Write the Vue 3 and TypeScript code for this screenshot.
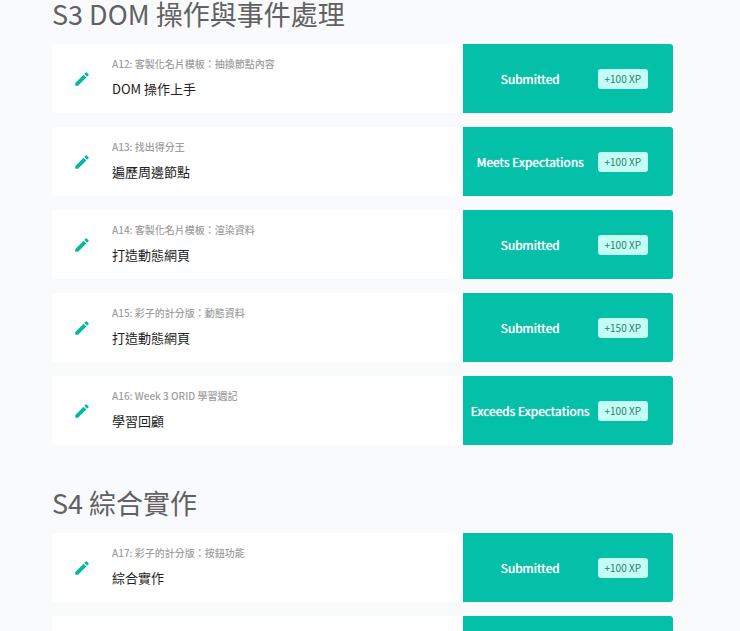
<script setup lang="ts">
interface Assignment {
  code: string
  title: string
  status: string
  xp: number
}
interface Section {
  name: string
  items: Assignment[]
}

const sections: Section[] = [
  {
    name: 'S3 DOM 操作與事件處理',
    items: [
      { code: 'A12: 客製化名片模板：抽換節點內容', title: 'DOM 操作上手', status: 'Submitted', xp: 100 },
      { code: 'A13: 找出得分王', title: '遍歷周邊節點', status: 'Meets Expectations', xp: 100 },
      { code: 'A14: 客製化名片模板：渲染資料', title: '打造動態網頁', status: 'Submitted', xp: 100 },
      { code: 'A15: 彩子的計分版：動態資料', title: '打造動態網頁', status: 'Submitted', xp: 150 },
      { code: 'A16: Week 3 ORID 學習週記', title: '學習回顧', status: 'Exceeds Expectations', xp: 100 },
    ],
  },
  {
    name: 'S4 綜合實作',
    items: [
      { code: 'A17: 彩子的計分版：按鈕功能', title: '綜合實作', status: 'Submitted', xp: 100 },
      { code: '', title: '', status: '', xp: 0 },
    ],
  },
]
</script>

<template>
  <main class="page">
    <section v-for="section in sections" :key="section.name" class="section">
      <h2 class="heading">{{ section.name }}</h2>
      <ul class="list">
        <li v-for="(item, i) in section.items" :key="i" class="card">
          <div class="info">
            <svg v-if="item.code" class="icon" viewBox="0 0 24 24" aria-hidden="true">
              <path d="M3 17.6V20.5a.5.5 0 0 0 .5.5h2.9a.5.5 0 0 0 .35-.15L17.81 9.94l-3.75-3.75L3.15 17.25A.5.5 0 0 0 3 17.6zM20.71 7.04a1 1 0 0 0 0-1.41l-2.34-2.34a1 1 0 0 0-1.41 0l-1.83 1.83 3.75 3.75 1.83-1.83z" />
            </svg>
            <div class="texts">
              <div class="code">{{ item.code }}</div>
              <div class="title">{{ item.title }}</div>
            </div>
          </div>
          <div class="result">
            <span class="status">{{ item.status }}</span>
            <span v-if="item.xp" class="xp">+{{ item.xp }} XP</span>
          </div>
        </li>
      </ul>
    </section>
  </main>
</template>

<style>
body {
  background: #f9fafc;
}
</style>

<style scoped>
.page {
  box-sizing: border-box;
  height: 100vh;
  overflow: hidden;
  padding: 0 67px 0 52px;
  background: #f9fafc;
  color: #212121;
  font-family: "Noto Sans CJK TC", "Noto Sans", sans-serif;
}
.section {
  margin-bottom: 44px;
}
.heading {
  margin: 0;
  padding-bottom: 16px;
  font-size: 27px;
  line-height: 28px;
  font-weight: 400;
  color: #616161;
}
.list {
  display: grid;
  gap: 14px;
  margin: 0;
  padding: 0;
  list-style: none;
}
.card {
  display: flex;
  height: 69px;
  border-radius: 3px;
  overflow: hidden;
  background: #fff;
}
.info {
  flex: 1;
  display: flex;
  align-items: center;
}
.icon {
  width: 18px;
  height: 18px;
  margin: 0 21px;
  fill: #06b8a0;
}
.code {
  font-size: 10px;
  line-height: 20px;
  font-weight: 500;
  color: #9e9e9e;
}
.title {
  padding-top: 1px;
  font-size: 13px;
  line-height: 28px;
  font-weight: 400;
}
.result {
  box-sizing: border-box;
  width: 210px;
  display: flex;
  align-items: center;
  padding-right: 25px;
  background: #04c0a8;
}
.status {
  flex: 1;
  text-align: center;
  white-space: nowrap;
  font-size: 12px;
  line-height: 20px;
  font-weight: 400;
  color: #fff;
  text-shadow: 0 0 1px #fff;
}
.xp {
  padding: 0 7px;
  border-radius: 3px;
  background: #c4fff5;
  font-size: 10px;
  line-height: 20px;
  color: #2b7d70;
}
</style>
